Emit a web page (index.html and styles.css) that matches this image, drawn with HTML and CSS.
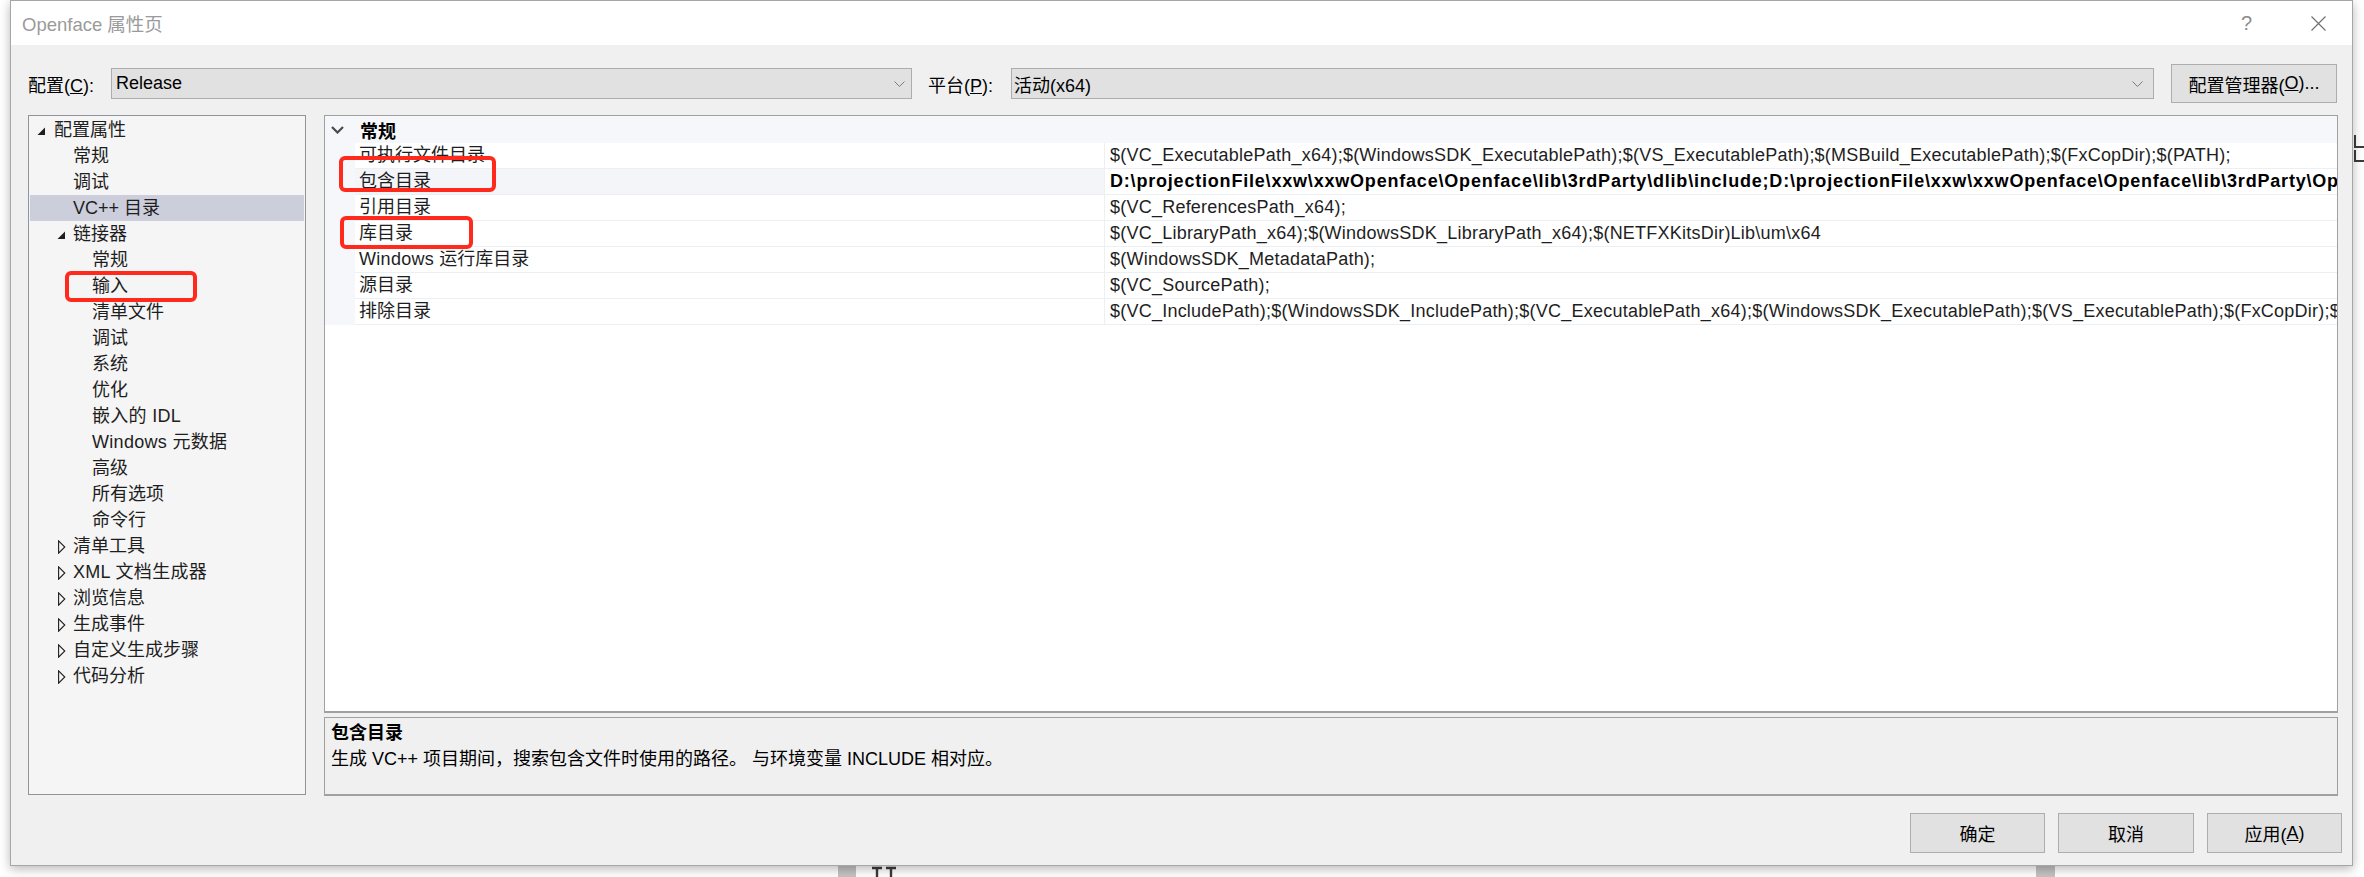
FILE: index.html
```html
<!DOCTYPE html>
<html lang="zh-CN">
<head>
<meta charset="utf-8">
<title>Openface 属性页</title>
<link rel="stylesheet" href="styles.css">
</head>
<body>
<div class="screen">
  <div class="dialog">
    <div class="titlebar">
      <span class="title">Openface 属性页</span>
      <span class="help">?</span>
      <svg class="close" width="15" height="15" viewBox="0 0 15 15"><path d="M0.5 0.5 L14.5 14.5 M14.5 0.5 L0.5 14.5" stroke="#6e6e6e" stroke-width="1.1" fill="none"/></svg>
    </div>
    <div class="toolbar">
      <span class="lbl">配置(<u>C</u>):</span>
      <div class="combo combo-cfg"><span class="val">Release</span><svg class="arrow" width="11" height="6" viewBox="0 0 11 6"><path d="M0.5 0.5 L5.5 5.5 L10.5 0.5" stroke="#7a7a7a" stroke-width="1" fill="none"/></svg></div>
      <span class="lbl lbl-plat">平台(<u>P</u>):</span>
      <div class="combo combo-plat"><span class="val">活动(x64)</span><svg class="arrow" width="11" height="6" viewBox="0 0 11 6"><path d="M0.5 0.5 L5.5 5.5 L10.5 0.5" stroke="#7a7a7a" stroke-width="1" fill="none"/></svg></div>
      <div class="btn btn-cfg">配置管理器(<u>O</u>)...</div>
    </div>
    <div class="main">
      <div class="tree">
        <div class="trow l0"><span class="tw"><svg width="9" height="9" viewBox="0 0 9 9"><polygon points="8,0.5 8,8 0.5,8" fill="#1e1e1e"/></svg></span><span>配置属性</span></div>
        <div class="trow l1"><span class="tw"></span><span>常规</span></div>
        <div class="trow l1"><span class="tw"></span><span>调试</span></div>
        <div class="trow l1 sel"><span class="tw"></span><span>VC++ 目录</span></div>
        <div class="trow l1"><span class="tw tw1"><svg width="9" height="9" viewBox="0 0 9 9"><polygon points="8,0.5 8,8 0.5,8" fill="#1e1e1e"/></svg></span><span>链接器</span></div>
        <div class="trow l2"><span class="tw"></span><span>常规</span></div>
        <div class="trow l2"><span class="tw"></span><span>输入</span></div>
        <div class="trow l2"><span class="tw"></span><span>清单文件</span></div>
        <div class="trow l2"><span class="tw"></span><span>调试</span></div>
        <div class="trow l2"><span class="tw"></span><span>系统</span></div>
        <div class="trow l2"><span class="tw"></span><span>优化</span></div>
        <div class="trow l2"><span class="tw"></span><span class="lat">嵌入的 IDL</span></div>
        <div class="trow l2"><span class="tw"></span><span class="lat">Windows 元数据</span></div>
        <div class="trow l2"><span class="tw"></span><span>高级</span></div>
        <div class="trow l2"><span class="tw"></span><span>所有选项</span></div>
        <div class="trow l2"><span class="tw"></span><span>命令行</span></div>
        <div class="trow l1"><span class="tw tw2"><svg width="8" height="14" viewBox="0 0 8 14"><polygon points="0.6,0.8 6.8,7 0.6,13.2" fill="none" stroke="#1e1e1e" stroke-width="1.1"/></svg></span><span>清单工具</span></div>
        <div class="trow l1"><span class="tw tw2"><svg width="8" height="14" viewBox="0 0 8 14"><polygon points="0.6,0.8 6.8,7 0.6,13.2" fill="none" stroke="#1e1e1e" stroke-width="1.1"/></svg></span><span class="lat">XML 文档生成器</span></div>
        <div class="trow l1"><span class="tw tw2"><svg width="8" height="14" viewBox="0 0 8 14"><polygon points="0.6,0.8 6.8,7 0.6,13.2" fill="none" stroke="#1e1e1e" stroke-width="1.1"/></svg></span><span>浏览信息</span></div>
        <div class="trow l1"><span class="tw tw2"><svg width="8" height="14" viewBox="0 0 8 14"><polygon points="0.6,0.8 6.8,7 0.6,13.2" fill="none" stroke="#1e1e1e" stroke-width="1.1"/></svg></span><span>生成事件</span></div>
        <div class="trow l1"><span class="tw tw2"><svg width="8" height="14" viewBox="0 0 8 14"><polygon points="0.6,0.8 6.8,7 0.6,13.2" fill="none" stroke="#1e1e1e" stroke-width="1.1"/></svg></span><span>自定义生成步骤</span></div>
        <div class="trow l1"><span class="tw tw2"><svg width="8" height="14" viewBox="0 0 8 14"><polygon points="0.6,0.8 6.8,7 0.6,13.2" fill="none" stroke="#1e1e1e" stroke-width="1.1"/></svg></span><span>代码分析</span></div>
      </div>
      <div class="rightcol">
        <div class="grid">
          <div class="ghead">
            <span class="chev"><svg width="13" height="8" viewBox="0 0 13 8"><path d="M1 1 L6.5 6.5 L12 1" stroke="#4a4a4a" stroke-width="2.2" fill="none"/></svg></span>
            <span class="ghead-text">常规</span>
          </div>
          <div class="prow"><span class="gut"></span><span class="pname">可执行文件目录</span><span class="pval">$(VC_ExecutablePath_x64);$(WindowsSDK_ExecutablePath);$(VS_ExecutablePath);$(MSBuild_ExecutablePath);$(FxCopDir);$(PATH);</span></div>
          <div class="prow psel"><span class="gut"></span><span class="pname">包含目录</span><span class="pval bold">D:\projectionFile\xxw\xxwOpenface\Openface\lib\3rdParty\dlib\include;D:\projectionFile\xxw\xxwOpenface\Openface\lib\3rdParty\OpenBLAS\include</span></div>
          <div class="prow"><span class="gut"></span><span class="pname">引用目录</span><span class="pval">$(VC_ReferencesPath_x64);</span></div>
          <div class="prow"><span class="gut"></span><span class="pname">库目录</span><span class="pval">$(VC_LibraryPath_x64);$(WindowsSDK_LibraryPath_x64);$(NETFXKitsDir)Lib\um\x64</span></div>
          <div class="prow"><span class="gut"></span><span class="pname"><span class="lat">Windows</span> 运行库目录</span><span class="pval">$(WindowsSDK_MetadataPath);</span></div>
          <div class="prow"><span class="gut"></span><span class="pname">源目录</span><span class="pval">$(VC_SourcePath);</span></div>
          <div class="prow"><span class="gut"></span><span class="pname">排除目录</span><span class="pval">$(VC_IncludePath);$(WindowsSDK_IncludePath);$(VC_ExecutablePath_x64);$(WindowsSDK_ExecutablePath);$(VS_ExecutablePath);$(FxCopDir);$(PATH);</span></div>
        </div>
        <div class="desc">
          <div class="desc-title">包含目录</div>
          <div class="desc-text">生成 VC++ 项目期间，搜索包含文件时使用的路径。 与环境变量 INCLUDE 相对应。</div>
        </div>
      </div>
    </div>
    <div class="buttons">
      <div class="btn btn-ok">确定</div>
      <div class="btn btn-cancel">取消</div>
      <div class="btn btn-apply">应用(<u>A</u>)</div>
    </div>
  </div>

  <div class="mark mark-a"></div>
  <div class="mark mark-b"></div>
  <div class="mark mark-c"></div>

  <svg class="edge-glyph" width="10" height="28" viewBox="0 0 10 28"><path d="M1 0 V12 H10 M1 15 V26 H10" stroke="#3c3c3c" stroke-width="2" fill="none"/></svg>
  <div class="bg-bar bar1"></div>
  <div class="bg-bar bar2"></div>
  <svg class="bg-tt" width="28" height="11" viewBox="0 0 28 11"><path d="M2 2 H12 M7 2 V11 M16 2 H26 M21 2 V11" stroke="#3a3a3a" stroke-width="2.4" fill="none"/></svg>
</div>
</body>
</html>
```

FILE: styles.css
```css
body {
  margin: 0;
  background: #ffffff;
}

.screen {
  position: relative;
  width: 2364px;
  height: 877px;
  overflow: hidden;
  background: #ffffff;
  font-family: "Liberation Sans", "Noto Sans CJK SC", sans-serif;
  font-size: 18px;
  color: #000000;
}

.dialog {
  position: relative;
  z-index: 1;
  margin-left: 10px;
  width: 2343px;
  height: 866px;
  box-sizing: border-box;
  border: 1px solid #a6a6a6;
  background: #f0f0f0;
  box-shadow: 0 3px 10px rgba(0, 0, 0, 0.28);
  display: flex;
  flex-direction: column;
}

/* title bar */
.titlebar {
  height: 44px;
  flex: none;
  background: #ffffff;
  display: flex;
  align-items: center;
  padding: 0 26px 0 11px;
}

.title {
  flex: 1;
  color: #9a9a9a;
  font-size: 18.5px;
  padding-bottom: 1px;
}

.help {
  color: #8c8c8c;
  font-size: 20px;
  margin-right: 59px;
}

.close {
  display: block;
}

/* config row */
.toolbar {
  margin-top: 19px;
  height: 39px;
  flex: none;
  display: flex;
  align-items: center;
  padding-left: 17px;
}

.lbl {
  width: 83px;
  flex: none;
  white-space: nowrap;
}

.lbl-plat {
  margin-left: 16px;
}

.combo {
  height: 31px;
  box-sizing: border-box;
  border: 1px solid #adadad;
  background: #e1e1e1;
  display: flex;
  align-items: center;
  padding-left: 4px;
  flex: none;
}

.combo-cfg {
  width: 801px;
  padding-right: 6px;
}

.combo-plat {
  width: 1143px;
  padding-left: 2px;
  padding-right: 10px;
}

.combo .val {
  flex: 1;
  white-space: nowrap;
}

.arrow {
  display: block;
}

.btn {
  box-sizing: border-box;
  border: 1px solid #adadad;
  background: #e1e1e1;
  display: flex;
  align-items: center;
  justify-content: center;
  white-space: nowrap;
  flex: none;
}

.btn-cfg {
  margin-left: 17px;
  width: 166px;
  height: 39px;
}

/* main area */
.main {
  margin-top: 12px;
  height: 681px;
  flex: none;
  display: flex;
  align-items: flex-start;
  padding-left: 17px;
}

.tree {
  width: 278px;
  height: 680px;
  box-sizing: border-box;
  border: 1px solid #8f939a;
  background: #f5f5f5;
  padding: 1px;
  flex: none;
}

.trow {
  height: 26px;
  line-height: 26px;
  display: flex;
  align-items: center;
  color: #1e1e1e;
  white-space: nowrap;
}

.trow.l0 { padding-left: 7px; }
.trow.l1 { padding-left: 26px; }
.trow.l2 { padding-left: 45px; }

.trow.sel {
  background: #cccedb;
}

.lat {
  letter-spacing: 0.3px;
}

.tw {
  width: 17px;
  height: 26px;
  flex: none;
  display: flex;
  align-items: center;
  padding-top: 3px;
  box-sizing: border-box;
}

.tw1 {
  padding-left: 1px;
}

.tw2 {
  padding-left: 2px;
  padding-top: 1px;
}

.tw svg {
  display: block;
}

.rightcol {
  margin-left: 18px;
  width: 2014px;
  flex: none;
  display: flex;
  flex-direction: column;
}

.grid {
  height: 598px;
  box-sizing: border-box;
  border: 1px solid #a0a0a0;
  border-bottom-width: 2px;
  background: #ffffff;
  overflow: hidden;
}

.ghead {
  height: 27px;
  background: #f5f7fa;
  display: flex;
  align-items: center;
}

.chev {
  width: 30px;
  flex: none;
  padding-left: 6px;
  box-sizing: border-box;
  display: flex;
  align-items: center;
}

.chev svg {
  display: block;
}

.ghead-text {
  font-weight: 700;
  padding-left: 5px;
}

.prow {
  height: 26px;
  display: flex;
}

.gut {
  width: 30px;
  flex: none;
  background: #f5f7fa;
}

.pname {
  width: 749px;
  flex: none;
  box-sizing: border-box;
  padding-left: 4px;
  line-height: 25px;
  border-bottom: 1px solid #eceff4;
  white-space: nowrap;
  color: #1e1e1e;
}

.pval {
  flex: 1;
  min-width: 0;
  box-sizing: border-box;
  padding-left: 5px;
  line-height: 25px;
  border-left: 1px solid #eceff4;
  border-bottom: 1px solid #eceff4;
  white-space: nowrap;
  overflow: hidden;
  color: #1e1e1e;
  letter-spacing: 0.23px;
}

.pval.bold {
  font-weight: 700;
  color: #000000;
  letter-spacing: 0.8px;
}

.psel .pname {
  background: #f3f5f9;
}

.desc {
  margin-top: 4px;
  height: 79px;
  box-sizing: border-box;
  border: 1px solid #a0a0a0;
  border-bottom-width: 2px;
  padding: 2px 6px 0 6px;
  background: #f0f0f0;
}

.desc-title {
  font-weight: 700;
  line-height: 26px;
}

.desc-text {
  line-height: 26px;
  white-space: nowrap;
}

/* bottom buttons */
.buttons {
  margin-top: 17px;
  display: flex;
  justify-content: flex-end;
  gap: 13px;
  padding-right: 10px;
}

.buttons .btn {
  height: 40px;
  width: 135px;
}

.buttons .btn-cancel {
  width: 136px;
}

/* red annotation boxes drawn over the screenshot */
.mark {
  position: absolute;
  z-index: 5;
  box-sizing: border-box;
  border: 4px solid #ff2a1c;
  border-radius: 6px;
}

.mark-a { left: 339px; top: 156px; width: 157px; height: 36px; }
.mark-b { left: 340px; top: 216px; width: 133px; height: 33px; }
.mark-c { left: 65px; top: 271px; width: 132px; height: 31px; }

/* desktop behind the dialog */
.edge-glyph {
  position: absolute;
  left: 2354px;
  top: 135px;
}

.bg-bar {
  position: absolute;
  top: 866px;
  height: 11px;
  background: #c3c3c3;
}

.bar1 { left: 838px; width: 18px; }
.bar2 { left: 2036px; width: 19px; }

.bg-tt {
  position: absolute;
  left: 870px;
  top: 866px;
}
```
